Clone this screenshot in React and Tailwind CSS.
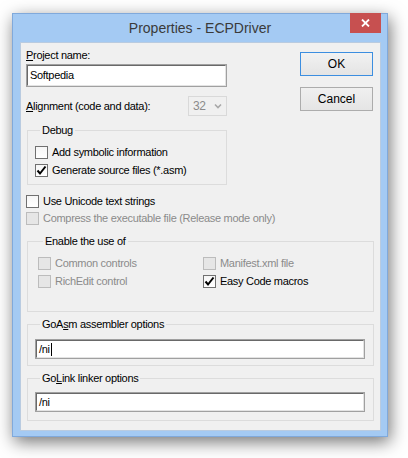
function Check({ label, checked, disabled }) {
  return (
    <div className="flex items-center h-[13px] gap-[4px]">
      <span
        className={
          disabled
            ? "w-[13px] h-[13px] border border-[#bcbcbc] bg-[#e6e6e6] flex items-center justify-center shrink-0"
            : "w-[13px] h-[13px] border border-[#707070] bg-gradient-to-b from-[#f6f6f6] to-[#ffffff] flex items-center justify-center shrink-0"
        }
      >
        {checked && (
          <svg width="11" height="11" viewBox="0 0 11 11">
            <path d="M1.5 5.5 L4 8.5 L9.5 1.5" fill="none" stroke="#000" strokeWidth="2" />
          </svg>
        )}
      </span>
      <span className={disabled ? "text-[#8b8b8b] whitespace-nowrap" : "text-black whitespace-nowrap"}>{label}</span>
    </div>
  );
}

function TextBox({ value, width, height, caret }) {
  return (
    <div className={`border border-[#a0a0a0] bg-white ${width} ${height}`}>
      <div className="h-full border border-t-[#696969] border-l-[#696969] border-r-[#e3e3e3] border-b-[#e3e3e3] flex items-center pl-[2px]">
        <span>{value}</span>
        {caret && <span className="w-px h-[13px] bg-black ml-px" />}
      </div>
    </div>
  );
}

function Group({ legend, className, children }) {
  return (
    <fieldset className={`border border-[#dcdcdc] ${className}`}>
      <legend className="ml-[5px] px-[2px] h-[13px] leading-[13px]">{legend}</legend>
      {children}
    </fieldset>
  );
}

export default function App() {
  return (
    <div className="w-[408px] h-[458px] bg-white pt-[13px] pl-[12px] font-['Liberation_Sans',Arial,sans-serif] text-[11px] leading-[13px] tracking-[-0.3px] text-black">
      <div className="w-[376px] h-[424px] bg-[#a4caf3] border border-[#80a9db] flex flex-col shadow-[2px_5px_16px_rgba(0,0,0,0.55)]">
        {/* title bar */}
        <div className="relative h-[28px] flex items-center justify-center">
          <span className="text-[14px] tracking-normal text-[#3a3a3a] pt-[1px]">Properties - ECPDriver</span>
          <div className="absolute top-[-1px] right-[6px] w-[31px] h-[20px] bg-[#c75050] flex items-center justify-center">
            <svg width="9" height="8" viewBox="0 0 9 8">
              <path d="M1 0.5 L8 7.5 M8 0.5 L1 7.5" stroke="#fff" strokeWidth="1.8" />
            </svg>
          </div>
        </div>

        {/* client area */}
        <div className="ml-[7px] mr-[6px] mb-[5px] flex-1 bg-[#f0f0f0] border border-[#b9cbe0] pl-[5px] pr-[7px]">
          <div className="flex justify-between">
            <div className="w-[201px] pt-[6px]">
              <div>
                <span className="underline">P</span>roject name:
              </div>
              <div className="mt-[2px]">
                <TextBox value="Softpedia" width="w-[201px]" height="h-[23px]" />
              </div>
              <div className="mt-[9px] flex items-center justify-between h-[20px]">
                <span>
                  <span className="underline">A</span>lignment (code and data):
                </span>
                <div className="w-[39px] h-[20px] border border-[#d9d9d9] flex items-center justify-between pl-[4px] pr-[4px]">
                  <span className="text-[#8b8b8b] text-[12px]">32</span>
                  <svg width="8" height="6" viewBox="0 0 8 6">
                    <path d="M1 1.5 L4 4.5 L7 1.5" fill="none" stroke="#a8a8a8" strokeWidth="1.6" />
                  </svg>
                </div>
              </div>
              <Group legend="Debug" className="mt-[8px] ml-px w-[200px] pl-[7px] pb-[7px]">
                <div className="mt-[9px] flex flex-col gap-[5px]">
                  <Check label="Add symbolic information" />
                  <Check label="Generate source files (*.asm)" checked />
                </div>
              </Group>
            </div>
            <div className="pt-[9px] flex flex-col gap-[11px]">
              <button className="w-[73px] h-[24px] border border-[#3c8ee0] bg-gradient-to-b from-[#f2f2f2] to-[#e4e4e4] text-[12px] tracking-normal">
                OK
              </button>
              <button className="w-[73px] h-[24px] border border-[#acacac] bg-gradient-to-b from-[#f0f0f0] to-[#e5e5e5] text-[12px] tracking-normal">
                Cancel
              </button>
            </div>
          </div>

          <div className="mt-[10px] flex flex-col gap-[4px]">
            <Check label="Use Unicode text strings" />
            <Check label="Compress the executable file (Release mode only)" disabled />
          </div>

          <Group legend="Enable the use of" className="mt-[10px] ml-px w-[347px] pl-[10px] pb-[23px]">
            <div className="mt-[9px] grid grid-cols-[165px_1fr] gap-y-[5px]">
              <Check label="Common controls" disabled />
              <Check label="Manifest.xml file" disabled />
              <Check label="RichEdit control" disabled />
              <Check label="Easy Code macros" checked />
            </div>
          </Group>

          <Group
            legend={
              <>
                GoA<span className="underline">s</span>m assembler options
              </>
            }
            className="mt-[6px] ml-px w-[347px] pl-[7px] pb-[6px]"
          >
            <div className="mt-[8px]">
              <TextBox value="/ni" width="w-[330px]" height="h-[20px]" caret />
            </div>
          </Group>

          <Group
            legend={
              <>
                Go<span className="underline">L</span>ink linker options
              </>
            }
            className="mt-[6px] ml-px w-[347px] pl-[7px] pb-[8px]"
          >
            <div className="mt-[7px]">
              <TextBox value="/ni" width="w-[330px]" height="h-[20px]" />
            </div>
          </Group>
        </div>
      </div>
    </div>
  );
}
